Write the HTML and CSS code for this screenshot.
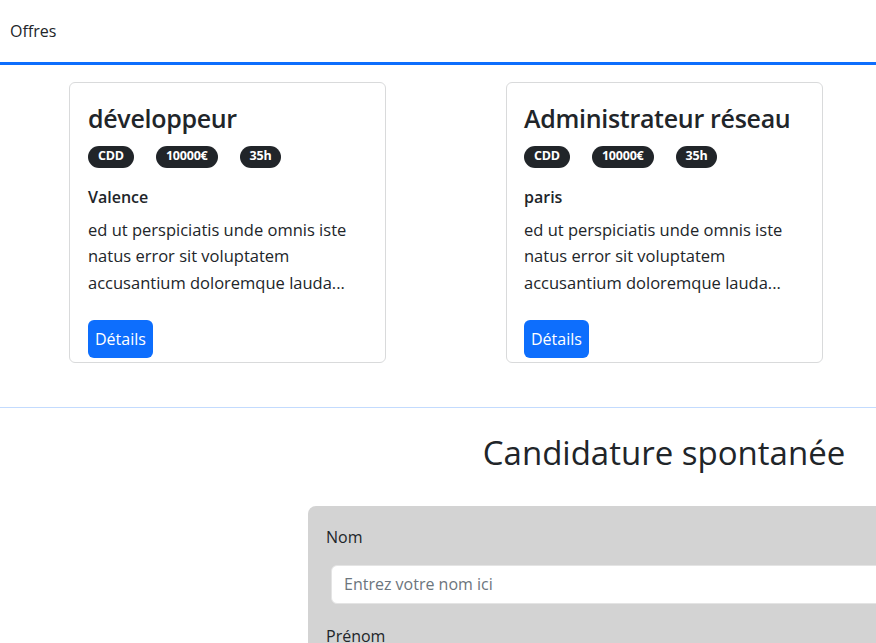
FILE: index.html
```html
<!DOCTYPE html>
<html lang="fr">
<head>
<meta charset="utf-8">
<title>Offres</title>
<link rel="stylesheet" href="styles.css">
</head>
<body>
<nav class="topbar">
  <a class="nav-link" href="#">Offres</a>
</nav>

<section class="offers">
  <article class="card">
    <h4 class="card-title">développeur</h4>
    <div class="badges">
      <span class="badge">CDD</span>
      <span class="badge">10000€</span>
      <span class="badge">35h</span>
    </div>
    <p class="city">Valence</p>
    <p class="desc">ed ut perspiciatis unde omnis iste natus error sit voluptatem accusantium doloremque lauda...</p>
    <a class="btn" href="#">Détails</a>
  </article>
  <article class="card">
    <h4 class="card-title">Administrateur réseau</h4>
    <div class="badges">
      <span class="badge">CDD</span>
      <span class="badge">10000€</span>
      <span class="badge">35h</span>
    </div>
    <p class="city">paris</p>
    <p class="desc">ed ut perspiciatis unde omnis iste natus error sit voluptatem accusantium doloremque lauda...</p>
    <a class="btn" href="#">Détails</a>
  </article>
</section>

<hr class="divider">

<section class="apply">
  <h1 class="apply-title">Candidature spontanée</h1>
  <form class="apply-form">
    <div class="field">
      <label class="label" for="nom">Nom</label>
      <input class="input" id="nom" type="text" placeholder="Entrez votre nom ici">
    </div>
    <div class="field">
      <label class="label" for="prenom">Prénom</label>
      <input class="input" id="prenom" type="text" placeholder="Entrez votre prénom ici">
    </div>
  </form>
</section>
</body>
</html>
```

FILE: styles.css
```css
html, body {
  overflow: hidden;
}
body {
  margin: 0;
  font-family: "Open Sans", "Noto Sans", sans-serif;
  font-size: 16px;
  line-height: 1.5;
  color: #212529;
  background: #fff;
}

.topbar {
  height: 62px;
  display: flex;
  align-items: center;
  padding-left: 10px;
  border-bottom: 3px solid #0d6efd;
}
.nav-link {
  color: #212529;
  text-decoration: none;
  font-size: 16px;
}

.offers {
  display: flex;
  gap: 120px;
  padding: 17px 0 0 69px;
}
.card {
  box-sizing: border-box;
  width: 317px;
  height: 281px;
  border: 1px solid #d9dadb;
  border-radius: 6px;
  padding: 16px 16px 0 18px;
  display: flex;
  flex-direction: column;
  align-items: flex-start;
}
.card:last-child {
  padding-left: 17px;
}
.card-title {
  margin: 4px 0 0;
  font-size: 25px;
  font-weight: 600;
  line-height: 1.2;
  letter-spacing: -0.3px;
}
.badges {
  display: flex;
  gap: 22px;
  margin-top: 13px;
}
.badge {
  display: inline-block;
  background: #212529;
  color: #fff;
  font-size: 12.5px;
  font-weight: 700;
  line-height: 1;
  padding: 4px 10px 5px;
  border-radius: 11px;
  letter-spacing: -0.2px;
}
.city {
  margin: 17px 0 0;
  font-weight: 600;
  font-size: 16px;
}
.desc {
  margin: 8px 0 0;
  font-size: 16.5px;
  line-height: 26.5px;
  width: 275px;
}
.btn {
  margin-top: auto;
  margin-bottom: 4px;
  display: inline-block;
  background: #0d6efd;
  color: #fff;
  text-decoration: none;
  border-radius: 6px;
  padding: 7px 7px;
  font-size: 16px;
  line-height: 24px;
}

.divider {
  margin: 44px 0 0;
  border: 0;
  height: 1px;
  background: #c3dbfe;
}

.apply {
  margin-left: 308px;
  width: 712px;
}
.apply-title {
  margin: 25px 0 0;
  text-align: center;
  font-size: 33px;
  font-weight: 400;
  line-height: 1.2;
}
.apply-form {
  margin-top: 33px;
  background: #d3d3d3;
  border-radius: 8px;
  padding: 19px 18px 20px;
}
.field {
  margin-bottom: 20px;
}
.label {
  display: block;
  font-size: 16px;
  margin-bottom: 16px;
}
.input {
  box-sizing: border-box;
  display: block;
  width: calc(100% - 5px);
  margin-left: 5px;
  height: 39px;
  border: 1px solid #e4e4e4;
  border-radius: 6px;
  padding: 6px 12px;
  font: inherit;
  font-size: 16px;
  background: #fff;
}
.input::placeholder {
  color: #6c757d;
}
```
